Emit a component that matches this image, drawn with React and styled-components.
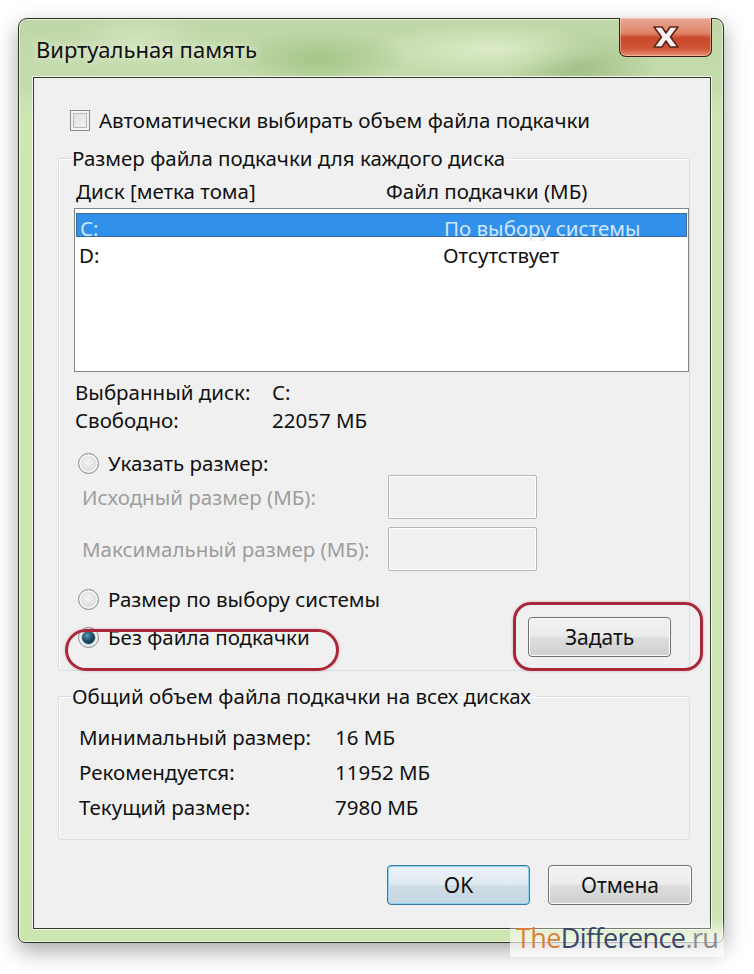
import React from 'react';
import styled, { createGlobalStyle } from 'styled-components';

const GlobalStyle = createGlobalStyle`
  html, body {
    margin: 0;
    padding: 0;
    background: #ffffff;
  }
  body {
    font-family: "Noto Sans", "Open Sans", sans-serif;
  }
`;

const Page = styled.div`
  position: relative;
  width: 754px;
  height: 974px;
  padding: 18px 0 0 18px;
  box-sizing: border-box;
  background: #ffffff;
  overflow: hidden;
`;

const Window = styled.div`
  width: 706px;
  box-sizing: border-box;
  border: 1px solid #2a3324;
  border-radius: 9px 9px 7px 7px;
  padding: 0 12px 13px 14px;
  background:
    radial-gradient(ellipse 90px 30px at 300px 40px, rgba(150, 190, 120, 0.7), transparent),
    radial-gradient(ellipse 120px 26px at 470px 30px, rgba(225, 240, 205, 0.8), transparent),
    radial-gradient(ellipse 80px 40px at 560px 50px, rgba(140, 175, 110, 0.6), transparent),
    radial-gradient(ellipse 70px 30px at 120px 20px, rgba(215, 232, 196, 0.7), transparent),
    linear-gradient(180deg, #bfd6a6 0px, #c6dcae 70px, #cfe7b3 100px, #cde6b0 100%);
  box-shadow: 0 8px 22px rgba(0, 0, 0, 0.35), inset 0 0 0 1px rgba(255, 255, 255, 0.6);
`;

const TitleBar = styled.div`
  display: flex;
  justify-content: space-between;
  align-items: flex-start;
  height: 58px;
`;

const Title = styled.div`
  margin-top: 15px;
  padding-left: 3px;
  font-size: 22px;
  color: #111;
  text-shadow: 0 0 8px rgba(255, 255, 255, 0.9);
`;

const CloseButton = styled.div`
  display: flex;
  align-items: center;
  justify-content: center;
  width: 93px;
  height: 39px;
  margin-top: -1px;
  margin-right: -1px;
  box-sizing: border-box;
  border: 1px solid #3b1b12;
  border-top: none;
  border-radius: 0 0 7px 7px;
  background: linear-gradient(180deg, #e9a996 0%, #de8468 40%, #c9472a 52%, #cf5638 80%, #e78b6b 100%);
  box-shadow: inset 0 0 0 1px rgba(255, 220, 200, 0.5);
`;

const Client = styled.div`
  border: 1px solid #2f3a2a;
  background: #f0f0f0;
  padding: 27px 20px 23px 24px;
  box-shadow: 0 0 0 1px rgba(255, 255, 255, 0.8);
`;

const CheckRow = styled.div`
  display: flex;
  align-items: center;
  gap: 9px;
  height: 30px;
  margin-left: 12px;
  font-size: 20.5px;
  color: #111;
`;

const CheckBox = styled.span`
  width: 20px;
  height: 21px;
  box-sizing: border-box;
  border: 1px solid #8a8a8a;
  background: linear-gradient(135deg, #dcdcdc, #f6f6f6);
  box-shadow: inset 0 0 0 2px #f4f4f4, inset 0 0 0 3px #b8b8b8;
`;

const Group = styled.fieldset`
  margin: ${p => p.$top}px 0 0 0;
  padding: 0 0 ${p => p.$bottom}px 15px;
  border: 1px solid #d5dfe5;
  border-radius: 3px;
  box-shadow: inset 1px 1px 0 #ffffff;
`;

const Legend = styled.legend`
  margin-left: -2px;
  padding: 0 5px 0 0;
  height: 26px;
  line-height: 26px;
  font-size: 20.5px;
  color: #111;
`;

const Text = styled.span`
  font-size: 20.5px;
  color: ${p => (p.$disabled ? '#9d9d9d' : '#111')};
`;

const HeaderRow = styled.div`
  display: grid;
  grid-template-columns: 310px 1fr;
  align-items: center;
  height: 26px;
  margin-top: 6px;
  padding-left: 2px;
`;

const ListBox = styled.div`
  margin-top: 5px;
  height: 164px;
  box-sizing: border-box;
  border: 1px solid #7f868e;
  background: #ffffff;
  padding: 4px 1px 0 1px;
`;

const ListRow = styled.div`
  display: grid;
  grid-template-columns: 364px 1fr;
  align-items: center;
  height: ${p => (p.$selected ? 24 : 28)}px;
  margin-bottom: ${p => (p.$selected ? 4 : 0)}px;
  padding-left: 3px;
  box-sizing: border-box;
  font-size: 20.5px;
  color: ${p => (p.$selected ? '#cfe6ff' : '#111')};
  background: ${p => (p.$selected ? '#3190ea' : 'transparent')};
  border: ${p => (p.$selected ? '1px solid #3a6d9c' : 'none')};
`;

const InfoRow = styled.div`
  display: grid;
  grid-template-columns: 197px 1fr;
  align-items: center;
  height: 28px;
  margin-top: ${p => p.$top || 0}px;
  padding-left: 1px;
`;

const RadioRow = styled.label`
  display: flex;
  align-items: center;
  gap: 9px;
  height: 24px;
  margin-top: ${p => p.$top}px;
  margin-left: 4px;
  position: relative;
`;

const Radio = styled.span`
  position: relative;
  width: 21px;
  height: 21px;
  box-sizing: border-box;
  border-radius: 50%;
  border: 1px solid #8b8b8b;
  background: radial-gradient(circle at 45% 40%, #f4f4f4 0%, #dcdcdc 60%, #c9c9c9 100%);
  box-shadow: inset 0 0 0 2px #f3f3f3;

  &::after {
    content: '';
    display: ${p => (p.$checked ? 'block' : 'none')};
    position: absolute;
    left: 3px;
    top: 3px;
    width: 13px;
    height: 13px;
    border-radius: 50%;
    background: radial-gradient(circle at 40% 35%, #5a9fb8 0%, #1d4f64 45%, #0b2530 100%);
    box-shadow: 0 0 2px rgba(80, 170, 220, 0.9);
  }
`;

const SizeRow = styled.div`
  display: grid;
  grid-template-columns: 306px 149px;
  align-items: center;
  height: 44px;
  margin-top: ${p => p.$top}px;
  margin-left: 8px;
`;

const SizeInput = styled.div`
  height: 44px;
  box-sizing: border-box;
  border: 1px solid #b5b5b5;
  border-radius: 2px;
  background: #f0f0f0;
  box-shadow: inset 0 0 0 1px #ffffff;
`;

const BottomRow = styled.div`
  display: flex;
  align-items: center;
  justify-content: space-between;
  height: 40px;
  margin-top: 6px;
  padding-right: 18px;
`;

const Button = styled.div`
  position: relative;
  display: flex;
  align-items: center;
  justify-content: center;
  width: ${p => p.$width}px;
  height: 40px;
  box-sizing: border-box;
  border: 1px solid ${p => (p.$primary ? '#3b7a9e' : '#707070')};
  border-radius: 4px;
  font-size: 21px;
  color: #111;
  background: ${p =>
    p.$primary
      ? 'linear-gradient(180deg, #eaf3f8 0%, #dfeaf0 48%, #cfdde6 52%, #c5d7e2 100%)'
      : 'linear-gradient(180deg, #f3f3f3 0%, #ebebeb 48%, #dddddd 52%, #cfcfcf 100%)'};
  box-shadow: inset 0 0 0 1px ${p => (p.$primary ? '#8fd3f2' : '#fcfcfc')};
`;

const Ellipse = styled.span`
  position: absolute;
  left: -13px;
  top: 4px;
  width: 274px;
  height: 42px;
  box-sizing: border-box;
  border: 3px solid #a8283a;
  border-radius: 22px;
  box-shadow: 0 0 3px rgba(200, 60, 80, 0.35);
  pointer-events: none;
`;

const Marker = styled.span`
  position: absolute;
  left: -16px;
  top: -16px;
  width: 190px;
  height: 69px;
  box-sizing: border-box;
  border: 3px solid #a8283a;
  border-radius: 18px;
  box-shadow: 0 0 3px rgba(200, 60, 80, 0.35);
  pointer-events: none;
`;

const Spacer = styled.div`
  height: ${p => p.$height}px;
`;

const TotalRow = styled.div`
  display: grid;
  grid-template-columns: 256px 1fr;
  align-items: center;
  height: 35px;
  margin-left: 5px;
`;

const ActionRow = styled.div`
  display: flex;
  justify-content: flex-end;
  gap: 18px;
  margin: 25px -2px 0 0;
`;

const Watermark = styled.div`
  position: absolute;
  left: 510px;
  top: 919px;
  padding: 0 6px;
  font-family: "Open Sans", "Noto Sans", sans-serif;
  font-size: 27px;
  letter-spacing: -0.6px;
  line-height: 38px;
  background: linear-gradient(180deg, rgba(255, 255, 255, 0) 0%, rgba(255, 255, 255, 0.55) 40%, rgba(255, 255, 255, 0.8) 100%);
`;

const Mark = styled.span`
  color: ${p => p.$color};
`;

const CloseGlyph = () => (
  <svg width="34" height="26" viewBox="0 0 34 26">
    <path
      d="M5 3 H13 L17 9 L21 3 H29 L21.5 13 L29 23 H21 L17 17 L13 23 H5 L12.5 13 Z"
      fill="#fbf2ef"
      stroke="#5a2418"
      strokeWidth="1.6"
      strokeLinejoin="round"
    />
  </svg>
);

const App = () => (
  <Page>
    <GlobalStyle />
    <Window>
      <TitleBar>
        <Title>Виртуальная память</Title>
        <CloseButton>
          <CloseGlyph />
        </CloseButton>
      </TitleBar>
      <Client>
        <CheckRow>
          <CheckBox />
          Автоматически выбирать объем файла подкачки
        </CheckRow>

        <Group $top={10} $bottom={13}>
          <Legend>Размер файла подкачки для каждого диска</Legend>
          <HeaderRow>
            <Text>Диск [метка тома]</Text>
            <Text>Файл подкачки (МБ)</Text>
          </HeaderRow>
          <ListBox>
            <ListRow $selected>
              <span>C:</span>
              <span>По выбору системы</span>
            </ListRow>
            <ListRow>
              <span>D:</span>
              <span>Отсутствует</span>
            </ListRow>
          </ListBox>

          <InfoRow $top={6}>
            <Text>Выбранный диск:</Text>
            <Text>C:</Text>
          </InfoRow>
          <InfoRow>
            <Text>Свободно:</Text>
            <Text>22057 МБ</Text>
          </InfoRow>

          <RadioRow $top={17}>
            <Radio />
            <Text>Указать размер:</Text>
          </RadioRow>
          <SizeRow $top={0}>
            <Text $disabled>Исходный размер (МБ):</Text>
            <SizeInput />
          </SizeRow>
          <SizeRow $top={8}>
            <Text $disabled>Максимальный размер (МБ):</Text>
            <SizeInput />
          </SizeRow>

          <RadioRow $top={16}>
            <Radio />
            <Text>Размер по выбору системы</Text>
          </RadioRow>
          <BottomRow>
            <RadioRow $top={0}>
              <Radio $checked />
              <Text>Без файла подкачки</Text>
              <Ellipse />
            </RadioRow>
            <Button $width={143}>
              Задать
              <Marker />
            </Button>
          </BottomRow>
        </Group>

        <Group $top={12} $bottom={15}>
          <Legend>Общий объем файла подкачки на всех дисках</Legend>
          <Spacer $height={10} />
          <TotalRow>
            <Text>Минимальный размер:</Text>
            <Text>16 МБ</Text>
          </TotalRow>
          <TotalRow>
            <Text>Рекомендуется:</Text>
            <Text>11952 МБ</Text>
          </TotalRow>
          <TotalRow>
            <Text>Текущий размер:</Text>
            <Text>7980 МБ</Text>
          </TotalRow>
        </Group>

        <ActionRow>
          <Button $width={143} $primary>OK</Button>
          <Button $width={144}>Отмена</Button>
        </ActionRow>
      </Client>
    </Window>
    <Watermark>
      <Mark $color="#d9813a">The</Mark>
      <Mark $color="#3b4768">Difference</Mark>
      <Mark $color="#8c8c8c">.ru</Mark>
    </Watermark>
  </Page>
);

export default App;
